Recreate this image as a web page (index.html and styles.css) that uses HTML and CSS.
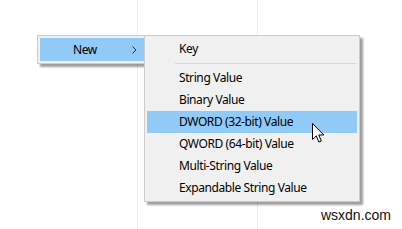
FILE: index.html
```html
<!DOCTYPE html>
<html lang="en">
<head>
  <meta charset="UTF-8">
  <title>New Value Menu</title>
  <link rel="stylesheet" href="styles.css">
</head>
<body>
  <div class="desk">
    <div class="grid-line line-a"></div>
    <div class="grid-line line-b"></div>

    <div class="menu parent-menu">
      <div class="item active">
        <span class="label">New</span>
        <svg class="chevron" width="5" height="8" viewBox="0 0 5 8">
          <path d="M0.5 0.5 L4 4 L0.5 7.5" fill="none" stroke="#333" stroke-width="1"/>
        </svg>
      </div>
    </div>

    <div class="menu sub-menu">
      <div class="item">Key</div>
      <div class="sep"></div>
      <div class="item">String Value</div>
      <div class="item">Binary Value</div>
      <div class="item active">DWORD (32-bit) Value</div>
      <div class="item">QWORD (64-bit) Value</div>
      <div class="item">Multi-String Value</div>
      <div class="item">Expandable String Value</div>
    </div>

    <svg class="cursor" width="13" height="21" viewBox="0 0 13 21">
      <path d="M0.5 0.5 L0.5 16.5 L4.3 12.9 L6.8 19 L9.3 18 L6.8 12 L11.8 12 Z" fill="#fff" stroke="#000" stroke-width="1" stroke-linejoin="miter"/>
    </svg>

    <div class="watermark">wsxdn.com</div>
  </div>
</body>
</html>
```

FILE: styles.css
```css
html, body {
  margin: 0;
  background: #fff;
}

body {
  font-family: "Noto Sans", "Open Sans", sans-serif;
  font-size: 12px;
  letter-spacing: -0.4px;
  color: #000;
}

.desk {
  position: relative;
  width: 402px;
  height: 229px;
  overflow: hidden;
}

.grid-line {
  position: absolute;
  top: 0;
  bottom: 0;
  width: 1px;
  background: #ececec;
}

.line-a { left: 137px; }
.line-b { left: 257px; }

.menu {
  position: absolute;
  background: #f0f0f0;
  border: 1px solid #cccccc;
  padding: 2px;
  box-shadow: 3px 3px 2px rgba(0, 0, 0, 0.38);
}

.item {
  height: 22px;
  line-height: 22px;
  white-space: nowrap;
}

.item.active {
  background: #91c9f7;
}

.parent-menu {
  left: 37px;
  top: 35px;
  width: 108px;
}

.parent-menu .item {
  display: flex;
  align-items: center;
  height: 23px;
  padding-left: 33px;
}

.parent-menu .label {
  flex: 1;
}

.parent-menu .chevron {
  margin-right: 11px;
}

.sub-menu {
  left: 144px;
  top: 35px;
  width: 210px;
  z-index: 2;
}

.sub-menu .item {
  padding-left: 32px;
}

.sep {
  height: 1px;
  background: #d7d7d7;
  margin: 3px 1px 3px 28px;
}

.cursor {
  position: absolute;
  left: 312px;
  top: 123px;
  z-index: 3;
}

.watermark {
  position: absolute;
  right: 11px;
  bottom: 6px;
  font-family: "Liberation Sans", Arial, sans-serif;
  font-size: 14px;
  letter-spacing: 0;
  color: #111;
}
```
